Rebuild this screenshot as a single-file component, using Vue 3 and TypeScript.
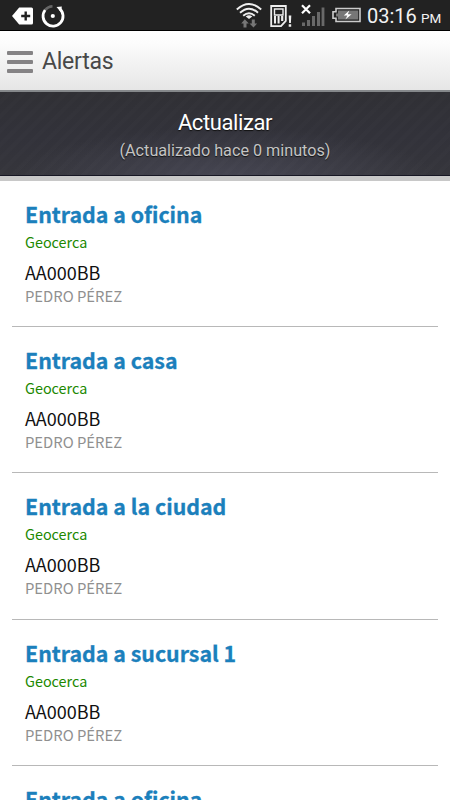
<script setup lang="ts">
interface Alerta {
  id: number
  titulo: string
  tipo: string
  patente: string
  conductor: string
}

const titulos: string[] = [
  'Entrada a oficina',
  'Entrada a casa',
  'Entrada a la ciudad',
  'Entrada a sucursal 1',
  'Entrada a oficina',
]

const alertas: Alerta[] = titulos.map((titulo, id) => ({
  id,
  titulo,
  tipo: 'Geocerca',
  patente: 'AA000BB',
  conductor: 'PEDRO PÉREZ',
}))
</script>

<template>
  <main class="screen">
    <div class="status">
      <svg class="plus" width="22" height="18" viewBox="0 0 22 18">
        <path d="M0 9 7.2 .5H19.5Q21 .5 21 2V16Q21 17.5 19.5 17.5H7.2Z" fill="#fff" />
        <path d="M13.7 4.5v9M9.2 9h9" stroke="#222" stroke-width="2.4" />
      </svg>
      <svg class="sync" width="24" height="24" viewBox="0 0 24 24">
        <path d="M4.1 6A10 10 0 0 1 11.5 2.2" fill="none" stroke="#666" stroke-width="2.6" />
        <path d="M18.8 4.7A10 10 0 1 1 4.1 6" fill="none" stroke="#fff" stroke-width="2.8" />
        <path d="M15.5 3 20.8 2.6 20.2 8.4Z" fill="#fff" />
        <circle cx="11.8" cy="12" r="2.1" fill="#fff" />
      </svg>
      <span class="spacer"></span>
      <svg class="signals" width="92" height="30" viewBox="236 0 92 30">
        <g fill="none" stroke="#eee" stroke-width="1.9">
          <path d="M236.8 9.5Q249 -1.7 261.2 9.5" />
          <path d="M240 12.8Q249 4.5 258 12.8" />
          <path d="M243.2 15.8Q249 10.6 254.8 15.8" />
        </g>
        <path d="m249 19-3.3-2.5q3.3-2.7 6.6 0Z" fill="#eee" />
        <path d="m244.8 19.3 4 4.3h-2.3v3.9h-3v-3.9h-2.3ZM253.5 27.6l-4-4.2h2.3v-3.9h3v3.9h2.3Z" fill="#777" />
        <path d="M271.2 6h14.6v14.8l-4.8 5.3h-9.8Z" fill="none" stroke="#eee" stroke-width="1.8" />
        <path d="M274.5 9h8.5v6h-8.5Z" fill="none" stroke="#eee" stroke-width="1.4" />
        <path d="M274 16h2v7.5h-2zm3.6 0h2v7.5h-2zm3.5 0h2.2v5h-2.2z" fill="#eee" />
        <path d="M288.7 15.5h2.6l-.4 7.5h-1.8ZM288.7 24.3h2.5v2.5h-2.5Z" fill="#eee" />
        <path d="M302 22.5h3V26h-3zm5-2.5h3v6h-3zm5-4h3v10h-3zm5-4h3v14h-3zm4.6-4.5h2.8V26h-2.8z" fill="#696969" />
        <path d="m302 5.3 8 8M310 5.3l-8 8" stroke="#fff" stroke-width="2.2" />
      </svg>
      <svg class="battery" width="30" height="17" viewBox="0 0 30 17">
        <path d="M4 1.5h24v13H4v-3.3H1V4.8h3Z" fill="none" stroke="#ccc" stroke-width="1.6" />
        <path d="M6 3.5h20.2v9H6v-3H4v-3h2Z" fill="#777" />
        <path d="m17.3 3.5-5.5 5 3.6-.1-2 4.1 6.2-5.3h-3.8Z" fill="#fff" />
      </svg>
      <span class="time">03:16</span><span class="pm">PM</span>
    </div>

    <header class="bar">
      <span class="burger"><i></i><i></i><i></i></span>
      <h1>Alertas</h1>
    </header>

    <button class="refresh" type="button">
      <span class="refresh-title">Actualizar</span>
      <span class="refresh-note">(Actualizado hace 0 minutos)</span>
    </button>

    <ul class="list">
      <li v-for="a in alertas" :key="a.id" class="item">
        <h2>{{ a.titulo }}</h2>
        <p class="tipo">{{ a.tipo }}</p>
        <p class="patente">{{ a.patente }}</p>
        <p class="conductor">{{ a.conductor }}</p>
      </li>
    </ul>
  </main>
</template>

<style>
body {
  overflow: hidden;
}
</style>

<style scoped>
.screen {
  width: 450px;
  height: 800px;
  overflow: hidden;
  background: #fff;
  font-family: "Noto Sans CJK SC", "Open Sans", sans-serif;
}
h1, h2, p, ul {
  margin: 0;
  padding: 0;
  font-weight: 400;
}
.status {
  box-sizing: border-box;
  height: 31px;
  display: flex;
  align-items: flex-start;
  background: #222;
  border-bottom: 1px solid #000;
  padding: 0 8px 0 12px;
  font-family: Roboto, sans-serif;
  color: #f2f2f2;
}
.plus { margin-top: 7px; }
.sync { margin: 4px 0 0 7px; }
.spacer { flex: 1; }
.battery { margin: 7px 0 0 4px; }
.time {
  margin-left: 5px;
  width: 50px;
  font-size: 20px;
  line-height: 33px;
  white-space: nowrap;
}
.pm {
  margin-left: 4px;
  width: 21px;
  font-size: 13.5px;
  line-height: 36px;
}
.bar {
  box-sizing: border-box;
  height: 61px;
  display: flex;
  align-items: center;
  padding: 2px 7px 0;
  background: linear-gradient(#fff, #fcfcfc 20%, #e6e6e6);
  border-bottom: 2px solid #85888b;
}
.burger {
  display: flex;
  flex-direction: column;
  gap: 5px;
  width: 26px;
}
.burger i {
  height: 4px;
  border-radius: 1px;
  background: #858385;
}
h1 {
  margin-left: 9px;
  padding-top: 1px;
  font: 400 23px/30px Roboto, sans-serif;
  letter-spacing: -.25px;
  color: #484848;
}
.refresh {
  box-sizing: border-box;
  width: 100%;
  height: 89px;
  display: flex;
  flex-direction: column;
  align-items: center;
  padding: 17px 0 0;
  border: 0;
  border-bottom: 5px solid #c8c8c8;
  background:
    repeating-linear-gradient(135deg, transparent 0 5px, rgba(255, 255, 255, .012) 6px 9px, transparent 10px),
    radial-gradient(ellipse 48% 60% at 50% 100%, rgba(80, 80, 96, .65), transparent),
    linear-gradient(#303035, #32323a 50%, #36363c);
  background-origin: border-box;
  box-shadow: inset 0 -1px #171724;
  font-family: Roboto, sans-serif;
  color: #fff;
  text-shadow: 0 1px 1px #111;
}
.refresh-title {
  font-size: 22px;
  line-height: 28px;
  letter-spacing: -.4px;
}
.refresh-note {
  font-size: 16.2px;
  line-height: 27px;
  color: #c4c4c4;
}
.list { list-style: none; }
.item {
  box-sizing: border-box;
  height: 146.2px;
  margin: 0 12px;
  padding: 18px 13px 0;
  border-bottom: 1px solid #b8b8b8;
}
h2 {
  font-size: 21.35px;
  line-height: 30px;
  font-weight: 700;
  color: #1b80bc;
  -webkit-text-stroke: .3px #1b80bc;
}
.tipo {
  margin-top: 1px;
  font-size: 14.4px;
  line-height: 24px;
  color: #208800;
}
.patente {
  margin-top: 5px;
  font-size: 18px;
  line-height: 26px;
  color: #111;
}
.conductor {
  font-size: 14.8px;
  line-height: 22px;
  color: #909090;
}
</style>
